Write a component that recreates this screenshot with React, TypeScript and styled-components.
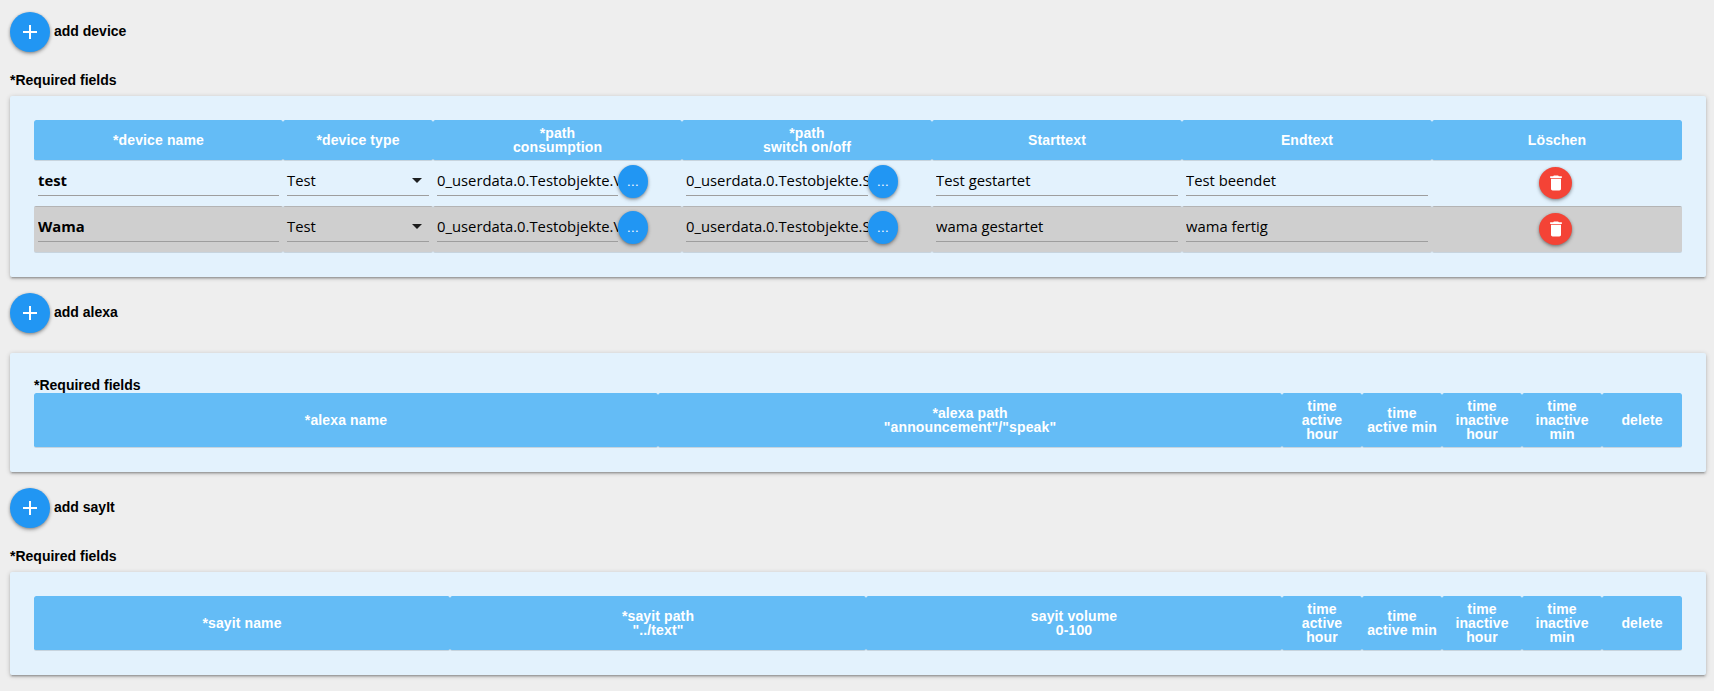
import React from "react";
import styled, { createGlobalStyle } from "styled-components";

const Global = createGlobalStyle`
  html, body { margin: 0; padding: 0; background: #eeeeee; }
  body { font-family: "Liberation Sans", Arial, sans-serif; }
`;

const Page = styled.main`
  display: flex;
  flex-direction: column;
  padding: 12px 8px 16px 10px;
`;
const Section = styled.section`
  display: flex;
  flex-direction: column;
  margin-bottom: 16px;
  &:last-child { margin-bottom: 0; }
`;
const AddRow = styled.div`
  display: flex;
  align-items: center;
  gap: 4px;
  height: 40px;
  margin-bottom: 20px;
`;
const Fab = styled.button`
  width: 40px;
  height: 40px;
  padding: 0;
  border: 0;
  border-radius: 50%;
  display: flex;
  align-items: center;
  justify-content: center;
  background: #2196f3;
  box-shadow: 0 1px 3px 0 rgba(0,0,0,.3), 0 2px 4px 0 rgba(0,0,0,.2);
`;
const AddLabel = styled.span`
  font-size: 14px;
  font-weight: 700;
  color: #000;
  position: relative;
  top: -1px;
`;
const Required = styled.div`
  font-size: 14px;
  font-weight: 700;
  line-height: 16px;
  height: 16px;
  color: #000;
`;
const OuterRequired = styled(Required)`
  margin-bottom: 8px;
`;
const Card = styled.div`
  background: #e3f2fd;
  border-radius: 2px;
  padding: 24px;
  box-shadow: 0 2px 2px 0 rgba(0,0,0,.14), 0 3px 1px -2px rgba(0,0,0,.12), 0 1px 5px 0 rgba(0,0,0,.2);
`;
const Table = styled.table`
  width: 100%;
  table-layout: fixed;
  border-collapse: separate;
  border-spacing: 0;
`;
const Th = styled.th<{ $h: number }>`
  box-sizing: border-box;
  height: ${(p) => p.$h}px;
  padding: 0 2px;
  background: #64bcf6;
  background-clip: padding-box;
  border-bottom: 1px solid rgba(0,0,0,.12);
  color: #fff;
  font-size: 14px;
  letter-spacing: 0.12px;
  line-height: 14px;
  font-weight: 700;
  text-align: center;
  vertical-align: middle;
  border-radius: 2px;
  white-space: pre-line;
`;
const Td = styled.td<{ $alt?: boolean }>`
  box-sizing: border-box;
  height: ${(p) => (p.$alt ? 47 : 45)}px;
  padding: 0 4px;
  border-radius: 2px;
  vertical-align: top;
  background: ${(p) => (p.$alt ? "#cfcfcf" : "transparent")};
  background-clip: padding-box;
  border-top: ${(p) => (p.$alt ? "1px solid #b4b4b4" : "0")};
  border-bottom: ${(p) => (p.$alt ? "1px solid rgba(0,0,0,.12)" : "0")};
`;
const FieldWrap = styled.div`
  display: flex;
  align-items: flex-start;
  padding-top: 4px;
`;
const Input = styled.input<{ $bold?: boolean }>`
  flex: 1 1 auto;
  min-width: 0;
  width: 100%;
  height: 30px;
  padding: 0;
  margin: 0;
  border: 0;
  border-bottom: 1px solid #9e9e9e;
  border-radius: 0;
  outline: none;
  background: transparent;
  color: #000;
  font-family: "Open Sans", sans-serif;
  font-size: 14.8px;
  font-weight: ${(p) => (p.$bold ? 700 : 400)};
`;
const PathInput = styled(Input)<{ $w: number }>`
  flex: 0 0 ${(p) => p.$w}px;
  width: ${(p) => p.$w}px;
`;
const SelectBox = styled.div`
  flex: 1 1 auto;
  height: 30px;
  display: flex;
  align-items: center;
  justify-content: space-between;
  border-bottom: 1px solid #9e9e9e;
  color: #000;
  font-family: "Open Sans", sans-serif;
  font-size: 14.8px;
`;
const Arrow = styled.svg`
  width: 24px;
  height: 24px;
  fill: rgba(0,0,0,.87);
  flex: none;
`;
const PickButton = styled.button`
  flex: none;
  width: 30px;
  height: 33px;
  padding: 0 0 1px;
  border: 0;
  border-radius: 50%;
  background: #2196f3;
  color: #fff;
  font-family: "Liberation Sans", sans-serif;
  font-size: 13px;
  letter-spacing: 0.4px;
  box-shadow: 0 1px 3px 0 rgba(0,0,0,.3), 0 2px 4px 0 rgba(0,0,0,.2);
`;
const DeleteWrap = styled.div`
  display: flex;
  justify-content: center;
  padding: 6px 3px 0 0;
`;
const DeleteButton = styled.button`
  display: flex;
  align-items: center;
  justify-content: center;
  width: 33px;
  height: 32px;
  padding: 0;
  border: 0;
  border-radius: 50%;
  background: #f44336;
  box-shadow: 0 1px 3px 0 rgba(0,0,0,.3), 0 2px 4px 0 rgba(0,0,0,.2);
`;

const Plus = () => (
  <svg width="24" height="24" viewBox="0 0 24 24" fill="#fff"><path d="M19 13h-6v6h-2v-6H5v-2h6V5h2v6h6v2z" /></svg>
);
const Trash = () => (
  <svg width="20" height="20" viewBox="0 0 24 24" fill="#fff"><path d="M6 19c0 1.1.9 2 2 2h8c1.1 0 2-.9 2-2V7H6v12zM19 4h-3.5l-1-1h-5l-1 1H5v2h14V4z" /></svg>
);

const deviceCols = [249, 150, 249, 250, 250, 250, 250];
const alexaCols = [624, 624, 80, 80, 80, 80, 80];
const sayitCols = [416, 416, 416, 80, 80, 80, 80, 80];

const Cols = ({ w }: { w: number[] }) => (
  <colgroup>{w.map((x, i) => <col key={i} width={x} />)}</colgroup>
);

const devices = [
  { name: "test", a: "0_userdata.0.Testobjekte.Verbrauch", b: "0_userdata.0.Testobjekte.Schalter", s: "Test gestartet", e: "Test beendet" },
  { name: "Wama", a: "0_userdata.0.Testobjekte.Verbrauch", b: "0_userdata.0.Testobjekte.Schalter", s: "wama gestartet", e: "wama fertig" },
];

const timeHeads = ["time\nactive\nhour", "time\nactive min", "time\ninactive\nhour", "time\ninactive\nmin", "delete"];

export default function App() {
  return (
    <Page>
      <Global />
      <Section>
        <AddRow><Fab><Plus /></Fab><AddLabel>add device</AddLabel></AddRow>
        <OuterRequired>*Required fields</OuterRequired>
        <Card>
          <Table>
            <Cols w={deviceCols} />
            <thead>
              <tr>
                {["*device name", "*device type", "*path\nconsumption", "*path\nswitch on/off", "Starttext", "Endtext", "Löschen"].map((t) => (
                  <Th key={t} $h={41}>{t}</Th>
                ))}
              </tr>
            </thead>
            <tbody>
              {devices.map((d, i) => {
                const alt = i === 1;
                return (
                  <tr key={d.name}>
                    <Td $alt={alt}><FieldWrap><Input $bold readOnly value={d.name} /></FieldWrap></Td>
                    <Td $alt={alt}>
                      <FieldWrap>
                        <SelectBox>
                          Test
                          <Arrow viewBox="0 0 24 24"><path d="M7 10l5 5 5-5z" /></Arrow>
                        </SelectBox>
                      </FieldWrap>
                    </Td>
                    <Td $alt={alt}><FieldWrap><PathInput $w={181} readOnly value={d.a} /><PickButton>...</PickButton></FieldWrap></Td>
                    <Td $alt={alt}><FieldWrap><PathInput $w={182} readOnly value={d.b} /><PickButton>...</PickButton></FieldWrap></Td>
                    <Td $alt={alt}><FieldWrap><Input readOnly value={d.s} /></FieldWrap></Td>
                    <Td $alt={alt}><FieldWrap><Input readOnly value={d.e} /></FieldWrap></Td>
                    <Td $alt={alt}><DeleteWrap><DeleteButton><Trash /></DeleteButton></DeleteWrap></Td>
                  </tr>
                );
              })}
            </tbody>
          </Table>
        </Card>
      </Section>
      <Section>
        <AddRow><Fab><Plus /></Fab><AddLabel>add alexa</AddLabel></AddRow>
        <Card>
          <Required>*Required fields</Required>
          <Table>
            <Cols w={alexaCols} />
            <thead>
              <tr>
                {["*alexa name", "*alexa path\n\"announcement\"/\"speak\"", ...timeHeads].map((t) => (
                  <Th key={t} $h={55}>{t}</Th>
                ))}
              </tr>
            </thead>
          </Table>
        </Card>
      </Section>
      <Section>
        <AddRow><Fab><Plus /></Fab><AddLabel>add sayIt</AddLabel></AddRow>
        <OuterRequired>*Required fields</OuterRequired>
        <Card>
          <Table>
            <Cols w={sayitCols} />
            <thead>
              <tr>
                {["*sayit name", "*sayit path\n\"../text\"", "sayit volume\n0-100", ...timeHeads].map((t) => (
                  <Th key={t} $h={55}>{t}</Th>
                ))}
              </tr>
            </thead>
          </Table>
        </Card>
      </Section>
    </Page>
  );
}
